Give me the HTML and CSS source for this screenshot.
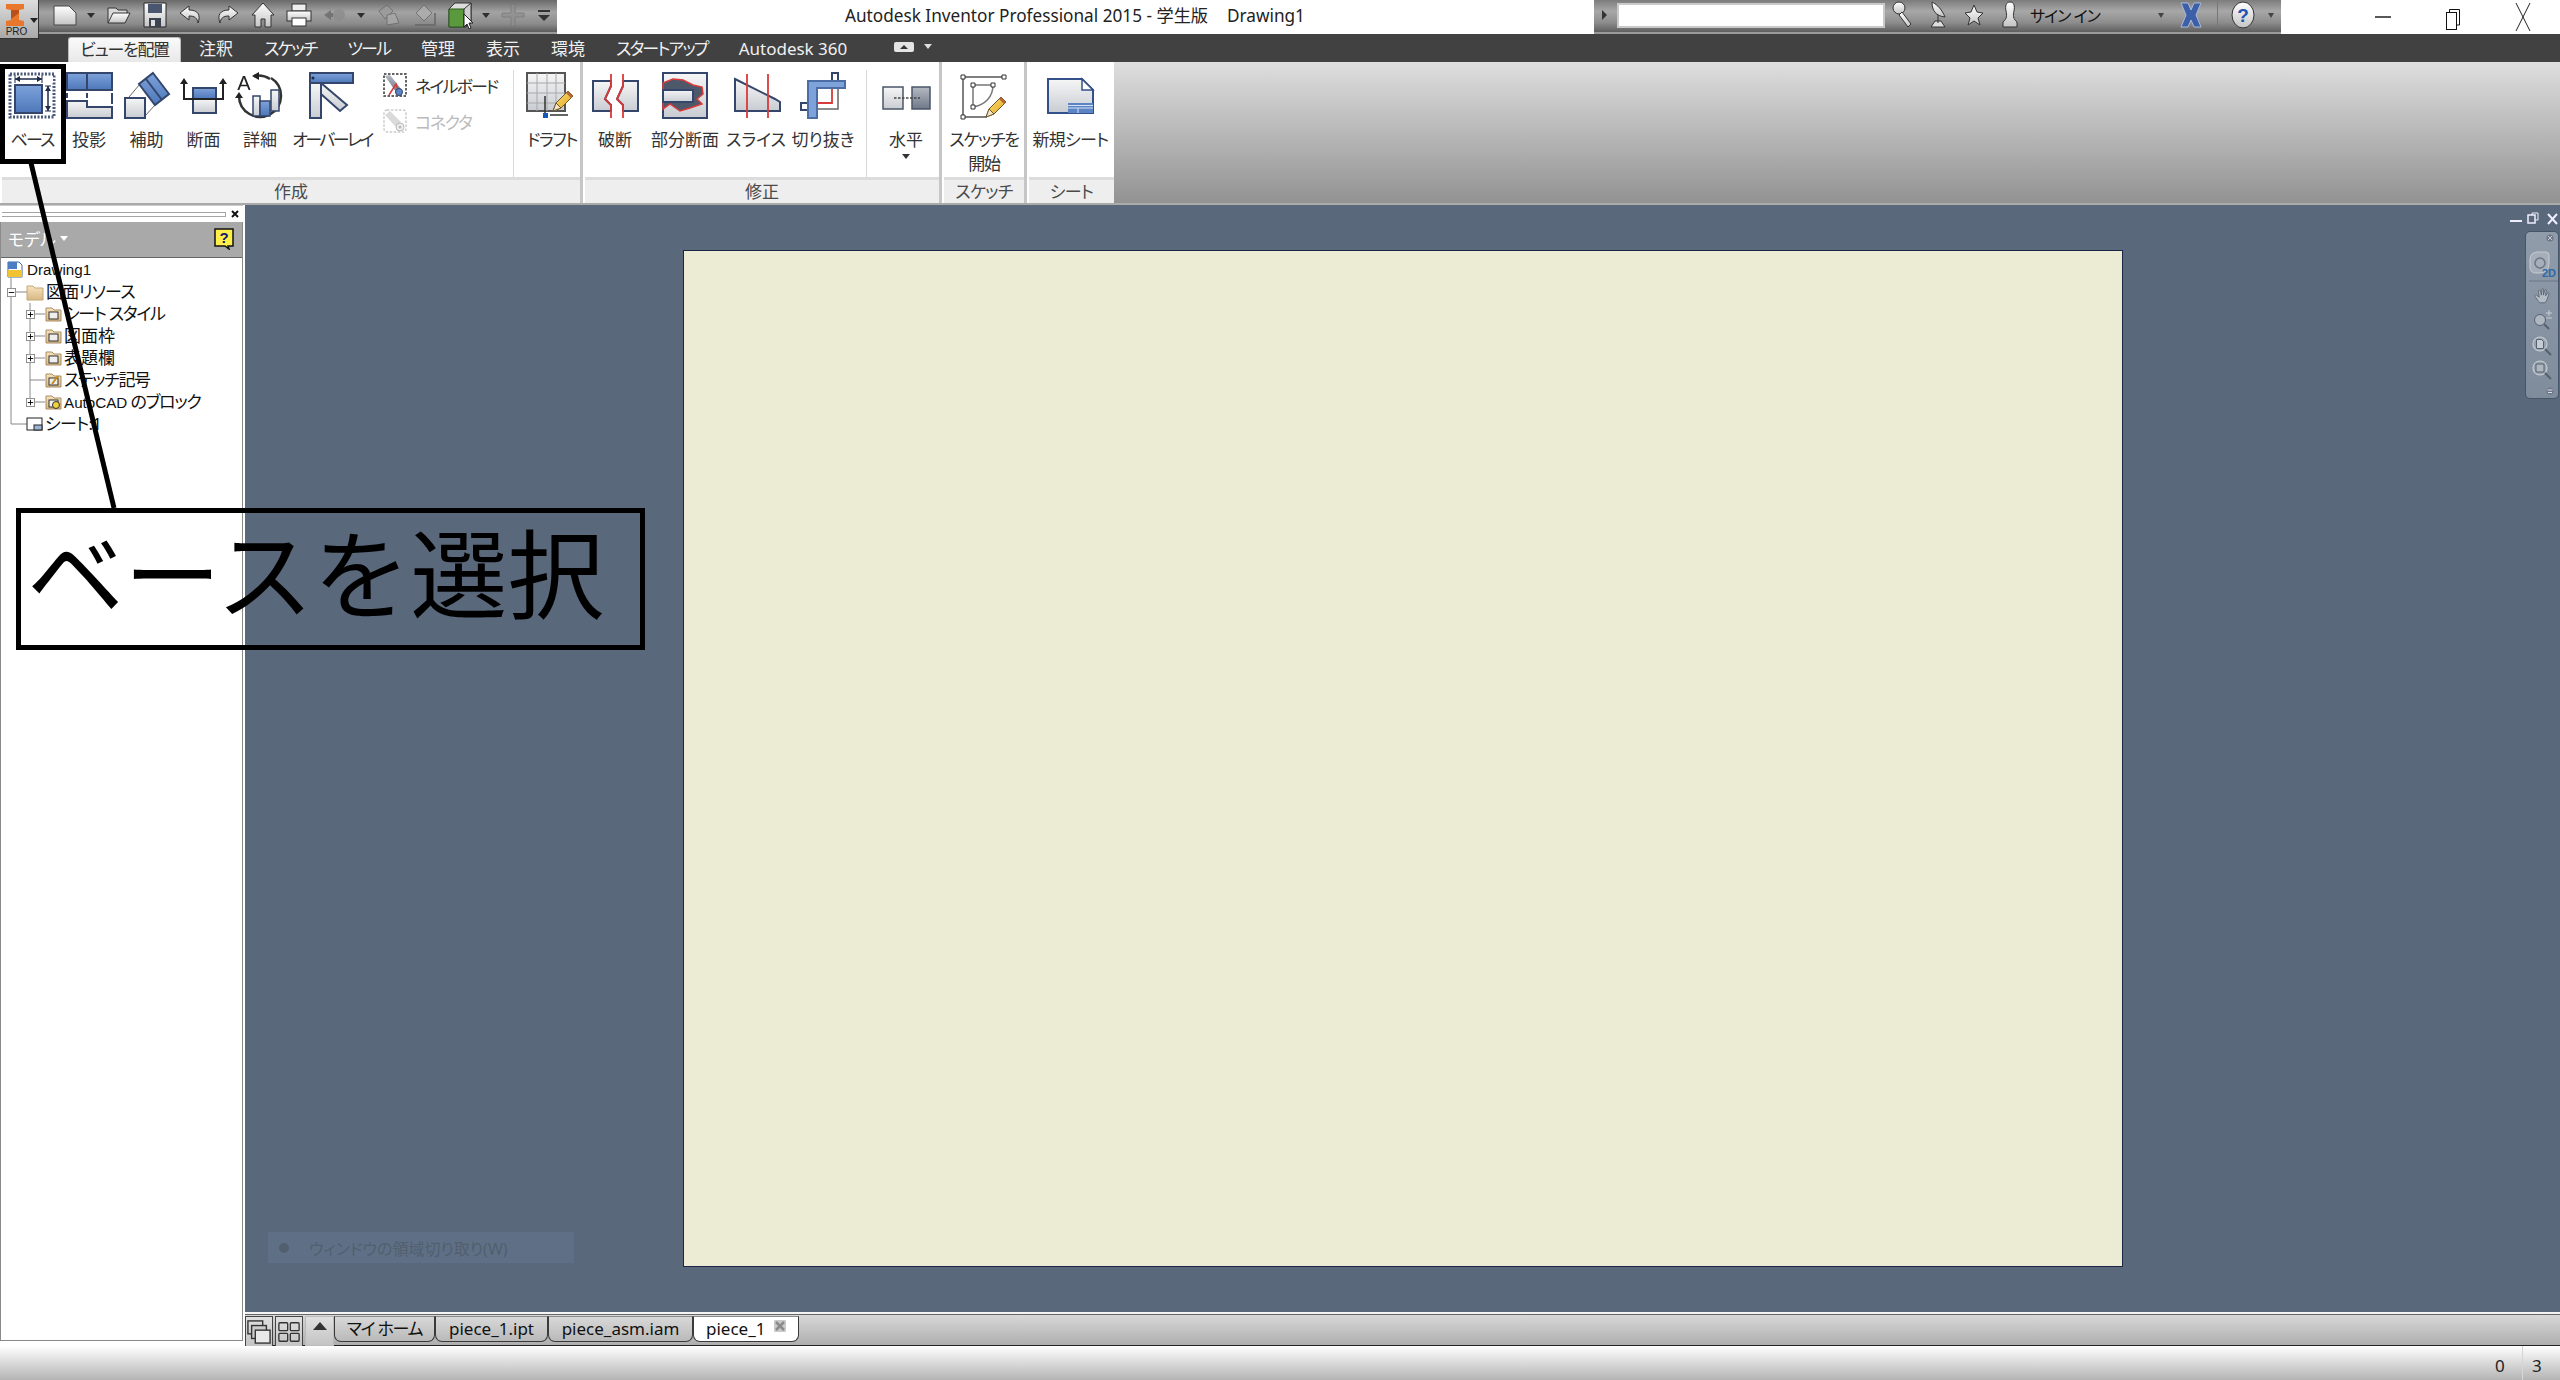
FILE: index.html
```html
<!DOCTYPE html>
<html lang="ja">
<head>
<meta charset="utf-8">
<title>Autodesk Inventor Professional 2015</title>
<link rel="stylesheet" href="styles.css">
</head>
<body>
<svg class="defs" width="0" height="0" aria-hidden="true">
  <defs>
    <linearGradient id="gb" x1="0" y1="0" x2="0" y2="1"><stop offset="0" stop-color="#7ea3db"/><stop offset="1" stop-color="#4d77b9"/></linearGradient>
    <linearGradient id="gg" x1="0" y1="0" x2="0" y2="1"><stop offset="0" stop-color="#f6f6f6"/><stop offset="1" stop-color="#c8ccd2"/></linearGradient>
    <linearGradient id="gd" x1="0" y1="0" x2="0" y2="1"><stop offset="0" stop-color="#b5bac2"/><stop offset="1" stop-color="#6f7888"/></linearGradient>
    <linearGradient id="gq" x1="0" y1="0" x2="0" y2="1"><stop offset="0" stop-color="#ffffff"/><stop offset="1" stop-color="#c4c4c4"/></linearGradient>
    <linearGradient id="gy" x1="0" y1="0" x2="1" y2="1"><stop offset="0" stop-color="#ffe27a"/><stop offset="1" stop-color="#e0a21c"/></linearGradient>
    <linearGradient id="gf" x1="0" y1="0" x2="0" y2="1"><stop offset="0" stop-color="#f7e3bd"/><stop offset="1" stop-color="#d8b885"/></linearGradient>
    <symbol id="plus" viewBox="0 0 10 10"><rect x=".5" y=".5" width="9" height="9" fill="#fff" stroke="#888"/><path d="M2 5h6M5 2v6" stroke="#000"/></symbol>
    <symbol id="minus" viewBox="0 0 10 10"><rect x=".5" y=".5" width="9" height="9" fill="#fff" stroke="#888"/><path d="M2 5h6" stroke="#000"/></symbol>
    <symbol id="folder" viewBox="0 0 17 17"><path d="M1 15V2h6l2 2h7v11z" fill="url(#gf)" stroke="#a98d62"/><rect x="4" y="6" width="9" height="7" fill="#eee" stroke="#333"/></symbol>
    <symbol id="pencil" viewBox="0 0 24 24"><path d="M2 22l3-8L17 2l5 5L10 19z" fill="url(#gy)" stroke="#6b5a2a"/><path d="M2 22l3-8 5 5z" fill="#f5e6c8" stroke="#6b5a2a"/><path d="M15 4l5 5 2-2-5-5z" fill="#b5673a"/></symbol>
  </defs>
</svg>

<header class="topbar">
  <div class="appbtn">
    <svg class="applogo" viewBox="0 0 20 24" width="20" height="24"><path d="M1 1h18v5l-5 1v10l5 1v5H1v-5l5-1V7L1 6z" fill="#e8762b"/><path d="M6 7l8 0v3l-8 6z" fill="#b9521a"/></svg>
    <svg class="caret-app" width="8" height="5" viewBox="0 0 8 5"><path d="M0 0h8L4 5z" fill="#222"/></svg>
    <span class="pro">PRO</span>
  </div>
  <div class="qat">
    <span class="qi"><svg width="26" height="24" viewBox="0 0 26 24"><path d="M2 3h15l7 7v12H2z" fill="url(#gq)" stroke="#444"/></svg></span>
    <span class="qa"><i class="tri"></i></span>
    <span class="qi"><svg width="26" height="22" viewBox="0 0 26 22"><path d="M2 19V4h8l2 2h9v3" fill="#d9d9d9" stroke="#333"/><path d="M2 19l5-10h17l-5 10z" fill="url(#gq)" stroke="#333"/></svg></span>
    <span class="qi"><svg width="24" height="26" viewBox="0 0 24 26"><path d="M1 1h22v24H1z" fill="url(#gq)" stroke="#222"/><rect x="5" y="2" width="14" height="9" fill="#4a5570"/><rect x="6" y="16" width="12" height="9" fill="#3b4252"/><rect x="8" y="18" width="4" height="6" fill="#ddd"/></svg></span>
    <span class="qi"><svg width="24" height="20" viewBox="0 0 24 20"><path d="M10 1L1 8l9 7v-4c6 0 8 2 9 7 3-8 0-13-9-13z" fill="url(#gq)" stroke="#333"/></svg></span>
    <span class="qi"><svg width="24" height="20" viewBox="0 0 24 20"><path d="M14 1l9 7-9 7v-4c-6 0-8 2-9 7-3-8 0-13 9-13z" fill="url(#gq)" stroke="#333"/></svg></span>
    <span class="qi"><svg width="24" height="26" viewBox="0 0 24 26"><path d="M12 1L1 13h3v12h6v-8h4v8h6V13h3z" fill="url(#gq)" stroke="#333"/></svg></span>
    <span class="qi"><svg width="26" height="24" viewBox="0 0 26 24"><rect x="6" y="1" width="14" height="7" fill="#eee" stroke="#333"/><rect x="1" y="8" width="24" height="10" fill="url(#gq)" stroke="#333"/><rect x="6" y="15" width="14" height="8" fill="#fff" stroke="#333"/></svg></span>
    <span class="qi dim"><svg width="24" height="18" viewBox="0 0 24 18"><path d="M1 9l7-5v3h2v4H8v3z" fill="#666"/><circle cx="16" cy="9" r="6" fill="#8b8b8b"/></svg></span>
    <span class="qa"><i class="tri"></i></span>
    <span class="qi dim"><svg width="24" height="24" viewBox="0 0 24 24"><path d="M2 8l8-6 6 6-8 8z" fill="#9b9b9b" stroke="#666"/><path d="M10 12l8-2 4 10-12 2z" fill="#aaa" stroke="#666"/></svg></span>
    <span class="qi dim"><svg width="24" height="24" viewBox="0 0 24 24"><path d="M3 10l8-8 8 8-8 8z" fill="#b0b0b0" stroke="#666"/><path d="M2 22h20V10" fill="none" stroke="#666" stroke-width="2"/></svg></span>
    <span class="qi"><svg width="28" height="28" viewBox="0 0 28 28"><path d="M2 8l6-6h16v20l-5 4H2z" fill="#ddd" stroke="#333"/><path d="M2 8h15v18H2z" fill="#5b9a3c" stroke="#2c5a1c"/><path d="M17 8l7-6v20l-7 4z" fill="#cfcfcf" stroke="#333"/><path d="M17 13v13l3-3 2 5 2-1-2-5h4z" fill="#fff" stroke="#222"/></svg></span>
    <span class="qa tight"><i class="tri"></i></span>
    <span class="qi dim"><svg width="24" height="24" viewBox="0 0 24 24"><path d="M10 1h4v9h9v4h-9v9h-4v-9H1v-4h9z" fill="#8f8f8f" stroke="#777"/></svg></span>
    <span class="qe"><svg width="12" height="12" viewBox="0 0 12 12"><path d="M0 1h12v2H0z" fill="#333"/><path d="M0 6h12L6 12z" fill="#333"/></svg></span>
  </div>
  <div class="title">Autodesk Inventor Professional 2015 - 学生版<span class="title-doc">Drawing1</span></div>
  <div class="infobar">
    <i class="tri-r"></i>
    <span class="search"></span>
    <span class="ib w36"><svg width="22" height="28" viewBox="0 0 22 28"><circle cx="7" cy="7" r="6" fill="url(#gq)" stroke="#333"/><path d="M10 11l9 12-3 3-9-12z" fill="url(#gq)" stroke="#333"/></svg></span>
    <span class="ib w34"><svg width="20" height="28" viewBox="0 0 20 28"><path d="M4 1c0 9 4 14 13 15C14 9 10 4 4 1z" fill="url(#gq)" stroke="#333"/><path d="M10 14v8M3 26h14l-4-6H7z" fill="#ddd" stroke="#333"/></svg></span>
    <span class="ib w38"><svg width="20" height="22" viewBox="0 0 20 22"><path d="M10 1l3 7 6 1-5 5 2 7-6-4-6 4 2-7-5-5 6-1z" fill="url(#gq)" stroke="#333"/></svg></span>
    <span class="ib w34"><svg width="22" height="28" viewBox="0 0 22 28"><path d="M11 1c4 0 5 4 4 9-1 4-1 8 3 11v5H4v-5c4-3 4-7 3-11-1-5 0-9 4-9z" fill="url(#gq)" stroke="#333"/></svg></span>
    <span class="signin">サイン イン</span>
    <span class="ib w16"><i class="tri small"></i></span>
    <span class="ib w44"><svg width="22" height="26" viewBox="0 0 22 26"><path d="M1 1h7l3 7 3-7h7l-5 12 5 12h-7l-3-7-3 7H1l5-12z" fill="#3d5fa8" stroke="#a9bbdc"/></svg></span>
    <span class="ibdiv"></span>
    <span class="ib w44"><svg width="24" height="28" viewBox="0 0 24 28"><ellipse cx="12" cy="14" rx="11" ry="13" fill="url(#gq)" stroke="#333"/><text x="12" y="21" class="help-q">?</text></svg></span>
    <span class="ib w12"><i class="tri small"></i></span>
  </div>
  <div class="win">
    <span class="wbtn"><svg width="16" height="2" viewBox="0 0 16 2"><path d="M0 1h16" stroke="#111" stroke-width="1.4"/></svg></span>
    <span class="wbtn"><svg width="16" height="28" viewBox="0 0 16 28"><rect x="1.500" y="9.500" width="10" height="17" fill="#fff" stroke="#111"/><path d="M4.500 9V6.500h10V22H12" fill="none" stroke="#111"/></svg></span>
    <span class="wbtn"><svg width="16" height="30" viewBox="0 0 16 30"><path d="M1 1l14 28M15 1L1 29" stroke="#222" stroke-width="1"/></svg></span>
  </div>
</header>

<nav class="tabs">
  <span class="tab active k2">ビューを配置</span>
  <span class="tab t-a">注釈</span>
  <span class="tab t-b k3">スケッチ</span>
  <span class="tab t-b k3">ツール</span>
  <span class="tab t-b">管理</span>
  <span class="tab t-b">表示</span>
  <span class="tab t-b">環境</span>
  <span class="tab t-b k3">スタートアップ</span>
  <span class="tab t-b">Autodesk 360</span>
  <span class="tab-ico"><svg width="20" height="10" viewBox="0 0 20 10"><rect width="20" height="10" rx="2" fill="#e4e4e4"/><path d="M6 7h8l-4-4z" fill="#333"/></svg><i class="tri lightt"></i></span>
</nav>

<section class="ribbon">
  <div class="panel p1">
    <div class="pbody">
      <div class="item w56">
        <svg class="ico" width="56" height="56" viewBox="0 0 56 56"><rect x="6" y="8" width="44" height="43" fill="#fff" stroke="#4a5a78" stroke-width="3" stroke-dasharray="2 1.500"/><rect x="11" y="19" width="27" height="28" fill="url(#gb)" stroke="#34466b" stroke-width="2"/><rect x="41" y="10" width="8" height="7" fill="#fff"/><path d="M11 13h27M44 20v25" stroke="#1f2c48" stroke-width="1.500"/><path d="M11 13l5-3v6zM38 13l-5-3v6zM44 20l-3 5h6zM44 45l-3-5h6z" fill="#1f2c48"/><path d="M41 20h6M41 45h6M11 9v8M38 9v8" stroke="#1f2c48"/></svg>
        <span class="lbl k3">ベース</span>
      </div>
      <div class="item w58">
        <svg class="ico" width="56" height="56" viewBox="0 0 56 56"><rect x="6" y="7" width="45" height="17" fill="url(#gb)" stroke="#34466b" stroke-width="2"/><path d="M26 7v17" stroke="#34466b" stroke-width="2"/><path d="M6 35h20v6h25v11H6z" fill="url(#gg)" stroke="#34466b" stroke-width="2"/><path d="M6 27v5M26 27v5M51 27v11" stroke="#34466b" stroke-width="2"/></svg>
        <span class="lbl">投影</span>
      </div>
      <div class="item w57">
        <svg class="ico" width="56" height="56" viewBox="0 0 56 56"><path d="M10 31l11-13M26 50l10-11" stroke="#666"/><rect x="6" y="32" width="20" height="20" fill="url(#gg)" stroke="#34466b" stroke-width="2"/><path d="M34 7l16 21-14 11-16-21z" fill="url(#gb)" stroke="#34466b" stroke-width="2"/><path d="M27 13l16 21" stroke="#34466b" stroke-width="2"/></svg>
        <span class="lbl">補助</span>
      </div>
      <div class="item w57">
        <svg class="ico" width="56" height="56" viewBox="0 0 56 56"><rect x="17" y="22" width="23" height="11" fill="url(#gb)" stroke="#34466b" stroke-width="2"/><rect x="17" y="33" width="23" height="14" fill="url(#gg)" stroke="#34466b" stroke-width="2"/><path d="M8 17v16h39V17" fill="none" stroke="#222" stroke-width="2"/><path d="M8 12l-4 6h8zM47 12l-4 6h8z" fill="#222"/></svg>
        <span class="lbl">断面</span>
      </div>
      <div class="item w56">
        <svg class="ico" width="56" height="56" viewBox="0 0 56 56"><path d="M39 12a21 21 0 1 1-32 18" fill="none" stroke="#333" stroke-width="2.500"/><path d="M22 10a21 21 0 0 1 16 3" fill="none" stroke="#333" stroke-width="2.500"/><path d="M20 10l7-4v8zM7 26l-4 6h8z" fill="#222"/><text x="12" y="24" class="ico-a">A</text><rect x="21" y="30" width="7" height="20" fill="url(#gg)" stroke="#34466b" stroke-width="1.500"/><rect x="28" y="35" width="10" height="15" fill="url(#gb)" stroke="#34466b" stroke-width="1.500"/><rect x="39" y="24" width="8" height="21" fill="url(#gg)" stroke="#34466b" stroke-width="1.500"/></svg>
        <span class="lbl">詳細</span>
      </div>
      <div class="item w88">
        <svg class="ico" width="88" height="56" viewBox="0 0 88 56"><path d="M33 17l26 22-7 6-19-17z" fill="url(#gg)" stroke="#34466b" stroke-width="2"/><path d="M22 17h11v35H22z" fill="url(#gg)" stroke="#34466b" stroke-width="2"/><rect x="22" y="7" width="43" height="10" fill="url(#gb)" stroke="#34466b" stroke-width="2"/><circle cx="25" cy="12" r="1.500" fill="#1f2c48"/></svg>
        <span class="lbl k4">オーバーレイ</span>
      </div>
      <div class="smalls">
        <div class="sm">
          <svg class="ico" width="24" height="24" viewBox="0 0 24 24"><rect x="1" y="1" width="22" height="22" fill="#fff" stroke="#333" stroke-dasharray="2.500 1.500" stroke-width="1.500"/><path d="M2 3l5-1 11 14-5 3z" fill="url(#gd)"/><path d="M6 22l7-11 4 11" fill="none" stroke="#d43a3a" stroke-width="1.500"/><circle cx="16" cy="19" r="3.500" fill="#5b84c4" stroke="#34466b"/></svg>
          <span class="k3">ネイルボード</span>
        </div>
        <div class="sm off">
          <svg width="24" height="24" viewBox="0 0 24 24"><rect x="1" y="1" width="22" height="22" rx="3" fill="#fff" stroke="#ccc" stroke-dasharray="2.500 1.500" stroke-width="1.500"/><path d="M2 6l5-4 11 11-5 5z" fill="#dadada"/><circle cx="17" cy="18" r="4" fill="#eee" stroke="#bbb"/><circle cx="17" cy="18" r="1.500" fill="#bbb"/></svg>
          <span class="k2">コネクタ</span>
        </div>
      </div>
      <span class="sep"></span>
      <div class="item w56">
        <svg class="ico" width="56" height="56" viewBox="0 0 56 56"><rect x="3" y="7" width="38" height="38" fill="url(#gg)" stroke="#555" stroke-width="2"/><path d="M3 17h38M3 27h38M3 37h38M13 7v38M23 7v38M32 7v38" stroke="#a8a8a8"/><path d="M21 30v18M26 49h18" stroke="#333" stroke-width="1.500"/><rect x="19" y="47" width="5" height="5" fill="#1459b5"/><use href="#pencil" x="27" y="23" width="24" height="24"/></svg>
        <span class="lbl k2">ドラフト</span>
      </div>
    </div>
    <div class="plabel">作成</div>
  </div>

  <div class="panel p2">
    <div class="pbody">
      <div class="item w56">
        <svg class="ico" width="56" height="56" viewBox="0 0 56 56"><path d="M24 15H6v30h18l0-6-6-6 6-13z" fill="url(#gg)" stroke="#34466b" stroke-width="2"/><path d="M36 15h15v30H36v-6l-6-6 6-13z" fill="url(#gg)" stroke="#34466b" stroke-width="2"/><path d="M24 8v12l-6 13 6 6v13M36 8v12l-6 13 6 6v13" fill="none" stroke="#d93a3a" stroke-width="1.800"/></svg>
        <span class="lbl">破断</span>
      </div>
      <div class="item w84">
        <svg class="ico" width="56" height="56" viewBox="0 0 56 56"><rect x="6" y="7" width="44" height="45" fill="url(#gg)" stroke="#34466b" stroke-width="2"/><path d="M6 17l10-4 10 1 10 5 9 2 1 7-6 5 5 5-12 4-10 3-10-7-7 5z" fill="#4d586b" stroke="#d93a3a" stroke-width="1.500"/><rect x="6" y="24" width="30" height="12" fill="url(#gg)" stroke="#34466b" stroke-width="2"/></svg>
        <span class="lbl">部分断面</span>
      </div>
      <div class="item w58">
        <svg class="ico" width="56" height="56" viewBox="0 0 56 56"><path d="M7 13l40 20 5 3v9H7z" fill="url(#gg)"/><path d="M7 13l40 20 5 3v9H7z" fill="none" stroke="#34466b" stroke-width="2"/><path d="M19 8v44M40 8v44" stroke="#d93a3a" stroke-width="1.800"/></svg>
        <span class="lbl">スライス</span>
      </div>
      <div class="item w76">
        <svg class="ico" width="56" height="56" viewBox="0 0 56 56"><path d="M37 15V7h6v8M13 37H6v7h7" fill="#fff" stroke="#34466b" stroke-width="2"/><path d="M43 22v21H22" fill="none" stroke="#666" stroke-width="1.500"/><path d="M22 37h15V22" fill="none" stroke="#d93a3a" stroke-width="1.800"/><path d="M13 15h37v7H22v30h-9z" fill="#7ea3db" stroke="#4d6ea5" stroke-width="2"/></svg>
        <span class="lbl">切り抜き</span>
      </div>
      <span class="sep"></span>
      <div class="item w58">
        <svg class="ico" width="56" height="56" viewBox="0 0 56 56"><rect x="5" y="21" width="20" height="22" fill="url(#gg)" stroke="#4a5568" stroke-width="1.500"/><rect x="34" y="21" width="18" height="22" fill="url(#gd)" stroke="#4a5568" stroke-width="1.500"/><path d="M16 32h26" stroke="#444" stroke-width="1.500" stroke-dasharray="2.500 1.500"/></svg>
        <span class="lbl">水平</span>
        <i class="tri dk"></i>
      </div>
    </div>
    <div class="plabel">修正</div>
  </div>

  <div class="panel p3">
    <div class="pbody">
      <div class="item w82">
        <svg class="ico" width="56" height="56" viewBox="0 0 56 56"><path d="M7 11h41M7 11v40h24" fill="none" stroke="#555" stroke-width="1.500"/><path d="M17 19h20c0 12-8 20-20 22z" fill="none" stroke="#777" stroke-width="1.500"/><path d="M5 9h4v4H5zM46 9h4v4h-4zM5 49h4v4H5zM15 17h4v4h-4zM35 17h4v4h-4zM15 39h4v4h-4z" fill="#fff" stroke="#333"/><use href="#pencil" x="28" y="29" width="24" height="24"/></svg>
        <span class="lbl k2">スケッチを<br>開始</span>
      </div>
    </div>
    <div class="plabel k1">スケッチ</div>
  </div>

  <div class="panel p4">
    <div class="pbody">
      <div class="item w87">
        <svg class="ico" width="56" height="56" viewBox="0 0 56 56"><path d="M5 13h34l11 11v23H5z" fill="url(#gg)" stroke="#34508a" stroke-width="2"/><path d="M39 13v11h11z" fill="#fff" stroke="#34508a" stroke-width="1.500"/><rect x="25" y="37" width="25" height="10" fill="#5b84c4"/><path d="M25 42h25M35 42v5M25 39.500h25" stroke="#d6e2f4"/></svg>
        <span class="lbl k1">新規シート</span>
      </div>
    </div>
    <div class="plabel k1">シート</div>
  </div>
  <div class="ribbon-fill"></div>
</section>

<main class="main">
  <aside class="browser">
    <div class="grip"><span class="grip-lines"></span><svg width="8" height="8" viewBox="0 0 8 8"><path d="M1 1l6 6M7 1L1 7" stroke="#111" stroke-width="2"/></svg></div>
    <div class="tree-box">
      <div class="bhead">
        <span class="bhead-t">モデル</span><i class="tri white"></i>
        <svg class="helpbox" width="20" height="22" viewBox="0 0 20 22"><path d="M1 1h18v17h-5l1 3-4-3H1z" fill="#ffef4a" stroke="#111" stroke-width="1.500"/><text x="10" y="15" class="help-y">?</text></svg>
      </div>
      <div class="tree">
        <div class="row"><svg class="pre" width="26" height="22" viewBox="0 0 26 22"><path d="M10 19v3" stroke="#888"/><path d="M7 3h11l3 3v12H7z" fill="#fff" stroke="#3a66a8"/><path d="M7 3h9v7H7z" fill="#4c7dc2"/><path d="M7 11h14v7H7z" fill="#f1c232"/></svg><span class="lat">Drawing1</span></div>
        <div class="row"><svg class="pre" width="45" height="22" viewBox="0 0 45 22"><path d="M10 0v22" stroke="#888"/><path d="M10 11h16" stroke="#888"/><use href="#minus" x="6" y="7" width="9" height="9"/><path d="M26 19V5h6l2 2h8v12z" fill="url(#gf)" stroke="#c4a676"/></svg><span class="k1">図面リソース</span></div>
        <div class="row"><svg class="pre" width="63" height="22" viewBox="0 0 63 22"><path d="M10 0v22M29 0v22M29 11h15" stroke="#888"/><use href="#plus" x="25" y="7" width="9" height="9"/><use href="#folder" x="44" y="3" width="17" height="17"/></svg><span class="k2">シート スタイル</span></div>
        <div class="row"><svg class="pre" width="63" height="22" viewBox="0 0 63 22"><path d="M10 0v22M29 0v22M29 11h15" stroke="#888"/><use href="#plus" x="25" y="7" width="9" height="9"/><use href="#folder" x="44" y="3" width="17" height="17"/></svg><span>図面枠</span></div>
        <div class="row"><svg class="pre" width="63" height="22" viewBox="0 0 63 22"><path d="M10 0v22M29 0v22M29 11h15" stroke="#888"/><use href="#plus" x="25" y="7" width="9" height="9"/><use href="#folder" x="44" y="3" width="17" height="17"/></svg><span>表題欄</span></div>
        <div class="row"><svg class="pre" width="63" height="22" viewBox="0 0 63 22"><path d="M10 0v22M29 0v22M29 11h15" stroke="#888"/><use href="#folder" x="44" y="3" width="17" height="17"/><path d="M51 15l6-8" stroke="#c98a1a" stroke-width="2"/></svg><span class="k2">ステッチ記号</span></div>
        <div class="row"><svg class="pre" width="63" height="22" viewBox="0 0 63 22"><path d="M10 0v22M29 0v11M29 11h15" stroke="#888"/><use href="#plus" x="25" y="7" width="9" height="9"/><use href="#folder" x="44" y="3" width="17" height="17"/><circle cx="55" cy="14" r="3.500" fill="#f1d23a" stroke="#333"/></svg><span class="k2"><span class="lat">AutoCAD</span> のブロック</span></div>
        <div class="row"><svg class="pre" width="44" height="22" viewBox="0 0 44 22"><path d="M10 0v11h16" fill="none" stroke="#888"/><rect x="26" y="5" width="15" height="12" fill="#fff" stroke="#222"/><rect x="33" y="12" width="8" height="5" fill="#9db3d6" stroke="#222"/></svg><span class="k1">シート:1</span></div>
      </div>
    </div>
  </aside>

  <div class="work">
    <div class="canvas">
      <div class="sheet"></div>
      <div class="mdi">
        <svg width="54" height="14" viewBox="0 0 54 14"><path d="M4 9h12" stroke="#eef" stroke-width="2"/><rect x="22" y="3" width="7" height="8" fill="none" stroke="#eef" stroke-width="1.500"/><path d="M26 3V1h6v7h-3" fill="none" stroke="#eef"/><path d="M42 2l9 10M51 2l-9 10" stroke="#eef" stroke-width="2"/></svg>
      </div>
      <div class="navbar">
        <svg width="34" height="168" viewBox="0 0 34 168">
          <circle cx="25" cy="7" r="3.500" fill="#6b7787"/><path d="M23 5l4 4M27 5l-4 4" stroke="#ccd"/>
          <path d="M5 29q0-8 8-8h8q3 0 3 3v8q0 10-10 10H11q-6 0-6-6z" fill="#a6aeb9" stroke="#c6ccd3"/><circle cx="15" cy="32" r="5" fill="none" stroke="#6a7585" stroke-width="1.500"/>
          <text x="17" y="46" class="nav-2d">2D</text>
          <path d="M4 50h29" stroke="#6b7787"/>
          <path transform="translate(4.400 20) scale(.7)" d="M13 72l-5-7c-1-2 1-3 2-2l4 3-1-9c0-2 2-2 3 0l1 6 1-8c0-2 2-2 2 0v8l2-7c1-2 3-1 2 1l-1 7 3-4c1-1 2 0 2 1l-3 9-3 4h-7z" fill="#b4bbc5" stroke="#56616f" stroke-width="1.200"/>
          <circle cx="15" cy="89" r="5.500" fill="#aeb6c0" stroke="#56616f"/><path d="M19 93l5 5" stroke="#56616f" stroke-width="2"/><path d="M21 82h6M24 79v6M21 87h6" stroke="#c6ccd3"/>
          <circle cx="15" cy="113" r="7" fill="#98a2ae" stroke="#c6ccd3" stroke-width="1.200"/><path d="M11.500 108.500h5l2 2v7h-7z" fill="#c6ccd3" stroke="#56616f"/><path d="M20 118l6 6" stroke="#56616f" stroke-width="2"/>
          <circle cx="15" cy="137" r="7" fill="#98a2ae" stroke="#c6ccd3" stroke-width="1.200"/><rect x="11" y="133" width="8" height="8" fill="#aeb6c0" stroke="#56616f"/><path d="M20 142l6 6" stroke="#56616f" stroke-width="2"/>
          <circle cx="25" cy="160" r="3.500" fill="#6b7787"/><path d="M22.500 159h5M23 161.500h4" stroke="#dde"/>
        </svg>
      </div>
      <div class="ghost"><i class="ghost-dot"></i><span>ウィンドウの領域切り取り(W)</span></div>
    </div>
    <div class="docbar">
      <span class="dbtn"><svg width="24" height="24" viewBox="0 0 26 26"><rect x="1" y="1" width="16" height="14" fill="none" stroke="#333" stroke-width="1.500"/><rect x="5" y="6" width="16" height="14" fill="#ccc" stroke="#333" stroke-width="1.500"/><rect x="9" y="11" width="16" height="14" fill="#e8e8e8" stroke="#333" stroke-width="1.500"/></svg></span>
      <span class="dbtn d2"><svg width="22" height="22" viewBox="0 0 25 25"><rect x="1" y="2" width="10" height="9" rx="1" fill="none" stroke="#333" stroke-width="1.500"/><rect x="14" y="2" width="10" height="9" rx="1" fill="none" stroke="#333" stroke-width="1.500"/><rect x="1" y="14" width="10" height="9" rx="1" fill="none" stroke="#333" stroke-width="1.500"/><rect x="14" y="14" width="10" height="9" rx="1" fill="none" stroke="#333" stroke-width="1.500"/></svg></span>
      <span class="dbtn d3"><svg class="up" width="14" height="8" viewBox="0 0 14 8"><path d="M0 8h14L7 0z" fill="#333"/></svg></span>
      <span class="dtab t1 k2">マイ ホーム</span>
      <span class="dtab t2">piece_1.ipt</span>
      <span class="dtab t3">piece_asm.iam</span>
      <span class="dtab t4">piece_1<svg class="xclose" width="12" height="12" viewBox="0 0 12 12"><rect width="12" height="12" rx="1" fill="#c9c9c9"/><path d="M2 2l8 8M10 2l-8 8" stroke="#8b8b8b" stroke-width="2.500"/></svg></span>
    </div>
  </div>
</main>

<footer class="status">
  <span class="st-a">0</span>
  <span class="st-b">3</span>
</footer>

<svg class="callout-line" width="130" height="360" viewBox="0 0 130 360"><path d="M31 0l83 345" stroke="#000" stroke-width="5" fill="none"/></svg>
<div class="base-mark"></div>
<div class="callout">ベースを選択</div>
</body>
</html>
```

FILE: styles.css
```css
* { box-sizing: border-box; }
html, body { margin: 0; padding: 0; }
body {
  width: 2560px;
  height: 1380px;
  overflow: hidden;
  position: relative;
  display: flex;
  flex-direction: column;
  background: #fff;
  color: #333;
  font-family: "Noto Sans", "Noto Sans CJK JP", sans-serif;
  font-size: 17px;
  font-feature-settings: "palt";
}
i { display: block; font-style: normal; }
.defs { flex: none; display: block; }

/* narrower kana runs */
.k1 { letter-spacing: -.7px; }
.k2 { letter-spacing: -1.3px; }
.k3 { letter-spacing: -1.9px; }
.k4 { letter-spacing: -2.6px; }

/* triangles */
.tri { width: 0; height: 0; border-left: 4px solid transparent; border-right: 4px solid transparent; border-top: 5px solid #2e2e2e; }
.tri.small { border-top-color: #444; border-left-width: 3.5px; border-right-width: 3.5px; }
.tri.dk { margin-top: 2px; border-top-color: #333; }
.tri.white { border-top-color: #fff; margin-left: 4px; }
.tri.lightt { border-top-color: #ddd; margin-left: 10px; }
.tri-r { width: 0; height: 0; border-top: 5px solid transparent; border-bottom: 5px solid transparent; border-left: 5px solid #333; margin: 0 8px 0 8px; }

/* top bar */
.topbar { height: 34px; flex: none; display: flex; background: #fff; }
.appbtn {
  width: 39px; height: 39px; flex: none; position: relative; z-index: 3;
  background: linear-gradient(#dedede, #a9a9a9);
  border-right: 1px solid #333; border-bottom: 1px solid #333;
  display: flex; flex-wrap: wrap; padding: 3px 0 0 5px;
}
.applogo { display: block; }
.caret-app { margin: 15px 0 0 5px; }
.pro { width: 100%; text-align: center; margin: -1px 0 0 -5px; font-family: "Liberation Sans", sans-serif; font-size: 10px; line-height: 12px; color: #222; }
.qat {
  width: 518px; flex: none; height: 34px; display: flex; align-items: center; padding: 0 0 2px 8px;
  background: linear-gradient(#6a6a6a, #a3a3a3 38%, #8b8b8b 75%, #5b5b5b);
  border-bottom: 2px solid #9a9a9a;
}
.qi { width: 36px; display: flex; justify-content: center; align-items: center; }
.qi.dim { opacity: .75; }
.qa { width: 16px; margin-right: 2px; display: flex; justify-content: center; }
.qa.tight { width: 14px; }
.qe { width: 26px; display: flex; justify-content: center; }
.title { width: 1037px; flex: none; height: 34px; line-height: 32px; padding-left: 288px; font-size: 17.2px; color: #222; white-space: nowrap; }
.title-doc { margin-left: 19px; }
.infobar {
  width: 687px; flex: none; height: 34px; display: flex; align-items: center; padding: 0 0 2px 0;
  background: linear-gradient(#7c7c7c, #a8a8a8 35%, #8d8d8d 70%, #5f5f5f);
  border-bottom: 2px solid #9a9a9a;
}
.search { width: 268px; height: 25px; background: #fff; border: 2px solid #c9c9c9; margin-left: 2px; }
.ib { display: flex; justify-content: center; align-items: center; flex: none; }
.w36 { width: 36px; } .w34 { width: 34px; } .w38 { width: 38px; } .w16 { width: 16px; } .w44 { width: 44px; } .w12 { width: 12px; }
.signin { width: 126px; padding-left: 3px; font-size: 16px; letter-spacing: -1px; color: #111; flex: none; }
.ibdiv { width: 1px; height: 26px; background: #777; margin: 0 3px 0 4px; flex: none; }
.help-q { font: bold 19px "Liberation Sans", sans-serif; fill: #2452b0; text-anchor: middle; }
.win { flex: 1; display: flex; justify-content: flex-end; padding-right: 2px; }
.wbtn { width: 70px; display: flex; justify-content: center; align-items: center; }

/* tabs */
.tabs { height: 28px; flex: none; background: #414141; display: flex; position: relative; padding-left: 68px; color: #f0f0f0; line-height: 29px; white-space: nowrap; }
.tab { flex: none; }
.tab.active {
  width: 113px; height: 25px; margin-top: 3px; text-align: center; line-height: 24px;
  background: linear-gradient(#fafafa, #e8e8e8); color: #333; border-radius: 3px 3px 0 0; border: 1px solid #bbb; border-bottom: 0;
}
.t-a { margin-left: 18px; }
.t-b { margin-left: 31px; }
.tab-ico { display: flex; align-items: center; margin-left: 47px; margin-top: -3px; }

/* ribbon */
.ribbon { height: 143px; flex: none; display: flex; background: #fff; border-bottom: 2px solid #aaa; }
.panel { display: flex; flex-direction: column; flex: none; padding-top: 2px; }
.p1 { width: 583px; border-right: 3px solid #c6c6c6; }
.p2 { width: 359px; border-right: 3px solid #c6c6c6; }
.p3 { width: 85px; border-right: 3px solid #c6c6c6; }
.p4 { width: 87px; }
.pbody { height: 113px; display: flex; padding-top: 2px; }
.p1 .pbody { padding-left: 4px; }
.p2 .pbody { padding-left: 4px; }
.plabel {
  height: 26px; border-top: 3px solid #dcdcdc; background: #eeeeee; text-align: center; line-height: 23px; color: #4a4a4a; margin-left: 2px;
}
.item { display: flex; flex-direction: column; align-items: center; flex: none; }
.w56 { width: 56px; } .w57 { width: 57px; } .w58 { width: 58px; } .w76 { width: 76px; } .w84 { width: 84px; } .w88 { width: 88px; } .w87 { width: 87px; }
.w82 { width: 82px; padding-left: 2px; }
.ico { display: block; flex: none; filter: blur(.35px); }
.lbl { display: block; text-align: center; line-height: 24px; margin-top: 6px; white-space: nowrap; color: #333; }
.ico-a { font: 20px "Liberation Sans", sans-serif; fill: #222; text-anchor: middle; }
.smalls { width: 132px; padding: 7px 0 0 7px; flex: none; }
.sm { display: flex; align-items: center; height: 24px; margin-bottom: 12px; white-space: nowrap; color: #333; }
.sm span { margin-left: 8px; }
.sm.off { color: #bbb; }
.sep { width: 1px; height: 108px; margin: 4px 10px 0 5px; background: #d8d8d8; flex: none; }
.ribbon-fill { flex: 1; background: linear-gradient(#dedede, #929292); }

/* main */
.main { height: 1141px; flex: none; display: flex; }
.browser { width: 245px; flex: none; padding: 0 2px 5px 0; display: flex; flex-direction: column; background: #fff; }
.grip { height: 17px; display: flex; align-items: center; padding: 0 0 0 2px; flex: none; border-top: 1px solid #ccc; }
.grip-lines { width: 224px; height: 5px; border-top: 1px solid #a5a5a5; border-bottom: 1px solid #a5a5a5; border-right: 1px solid #a5a5a5; margin-right: 5px; }
.tree-box { flex: 1; display: flex; flex-direction: column; border: 1px solid #8a8a8a; border-top: 0; }
.bhead { height: 35px; flex: none; background: #a9a9a9; color: #fff; display: flex; align-items: center; padding: 0 8px 2px 7px; }
.helpbox { margin-left: auto; }
.help-y { font: bold 15px "Liberation Sans", sans-serif; fill: #141a6e; text-anchor: middle; }
.tree { flex: 1; background: #fff; padding-top: 1px; color: #111; border-top: 1px solid #666; }
.row { height: 22px; display: flex; align-items: center; white-space: nowrap; line-height: 22px; }
.pre { display: block; flex: none; }
.lat { font-family: "Liberation Sans", sans-serif; font-size: 15.200px; letter-spacing: 0; }

/* canvas */
.work { flex: 1; display: flex; flex-direction: column; min-width: 0; }
.canvas { height: 1107px; flex: none; position: relative; background: #5a687c; padding: 45px 0 0 438px; }
.sheet { width: 1440px; height: 1017px; background: #ecebd4; border: 1px solid #1d2547; }
.mdi { position: absolute; right: 0; top: 7px; }
.mdi svg { display: block; }
.navbar {
  position: absolute; left: 2280px; top: 26px; width: 34px; height: 168px;
  background: linear-gradient(#909caa, #7f8c9c); border: 1px solid #46556a; border-radius: 5px;
}
.navbar svg { display: block; margin: -1px; }
.nav-2d { font: bold 11px "Liberation Sans", sans-serif; fill: #2f6aa8; }
.ghost {
  position: absolute; left: 23px; top: 1027px; width: 306px; height: 31px;
  background: #5f7086; display: flex; align-items: center; color: #515f6f; font-size: 16px;
}
.ghost-dot { width: 10px; height: 10px; border-radius: 50%; background: #515f6f; margin: 0 20px 0 11px; }

/* document tabs */
.docbar {
  height: 34px; flex: none; display: flex; align-items: flex-start;
  border-top: 2px solid #f4f4f4; padding-top: 0;
  background: linear-gradient(#d9d9d9, #adadad);
  box-shadow: inset 0 1px 0 #666, inset 0 -1px 0 #222;
}
.dbtn { width: 28px; height: 30px; margin-top: 2px; flex: none; display: flex; align-items: center; justify-content: center; background: linear-gradient(#e0e0e0, #c4c4c4); border: 1px solid #444; border-bottom: 0; }
.d2 { width: 28px; margin-left: 2px; }
.d3 { width: 29px; margin-left: 2px; align-items: flex-start; border: 1px solid #bbb; }
.up { margin-top: 5px; }
.dtab {
  height: 26px; margin-top: 2px; flex: none; text-align: center; line-height: 24px;
  background: linear-gradient(#d8d8d8, #b9b9b9); color: #111;
  border: 1px solid #3a3a3a; border-top: 1px solid #8a8a8a; border-left-width: 1px; border-radius: 0 0 7px 7px;
}
.t1 { width: 101px; }
.t2 { width: 113px; }
.t3 { width: 145px; }
.t4 { width: 106px; background: #fff; position: relative; text-align: left; padding-left: 12px; }
.xclose { position: absolute; left: 80px; top: 3px; }

/* status */
.status { height: 34px; flex: none; display: flex; justify-content: flex-end; align-items: center; background: linear-gradient(#ffffff, #b4b4b4); font-size: 17px; color: #222; }
.st-a { width: 37px; height: 34px; line-height: 40px; padding-left: 9px; border-right: 1px solid #d5d5d5; }
.st-b { width: 37px; height: 34px; line-height: 40px; padding-left: 9px; }

/* annotation overlay */
.callout-line { position: absolute; left: 0; top: 163px; z-index: 6; }
.base-mark { position: absolute; left: 0; top: 64px; width: 66px; height: 100px; border: 5px solid #000; z-index: 6; }
.callout {
  position: absolute; left: 16px; top: 508px; width: 629px; height: 142px; z-index: 6;
  border: 5px solid #000; color: #000; padding-left: 6px;
  font-family: "Noto Sans CJK JP", sans-serif; font-size: 97px; line-height: 112px; white-space: nowrap; font-feature-settings: normal;
}
```
